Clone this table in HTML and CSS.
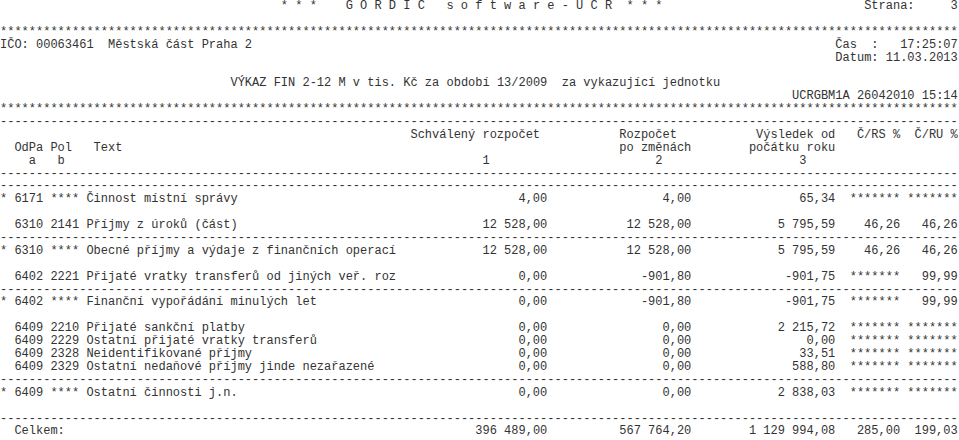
FILE: index.html
```html
<!DOCTYPE html>
<html lang="cs">
<head>
<meta charset="utf-8">
<title>VÝKAZ FIN 2-12 M</title>
<link rel="stylesheet" href="styles.css">
</head>
<body>
<div class="report">
  <div class="line split"><span class="title">* * *    G O R D I C   s o f t w a r e - U C R  * * *</span><span>Strana:     3</span></div>
  <div class="line blank"></div>
  <div class="line">*************************************************************************************************************************************</div>
  <div class="line split"><span>IČO: 00063461  Městská část Praha 2</span><span>Čas  :   17:25:07</span></div>
  <div class="line split"><span></span><span>Datum: 11.03.2013</span></div>
  <div class="line blank"></div>
  <div class="line indent">VÝKAZ FIN 2-12 M v tis. Kč za období 13/2009  za vykazující jednotku</div>
  <div class="line split"><span></span><span>UCRGBM1A 26042010 15:14</span></div>
  <div class="line">*************************************************************************************************************************************</div>
  <div class="line">-------------------------------------------------------------------------------------------------------------------------------------</div>
  <div class="row"><span></span><span>Schválený rozpočet </span><span>Rozpočet  </span><span>Výsledek od</span><span>Č/RS %</span><span>Č/RU %</span></div>
  <div class="row"><span>  OdPa Pol   Text</span><span></span><span>po změnách</span><span>počátku roku</span><span></span><span></span></div>
  <div class="row"><span>    a   b</span><span>1        </span><span>2    </span><span>3    </span><span></span><span></span></div>
  <div class="line">-------------------------------------------------------------------------------------------------------------------------------------</div>
  <div class="line">-------------------------------------------------------------------------------------------------------------------------------------</div>
  <div class="row"><span>* 6171 **** Činnost místní správy</span><span>4,00</span><span>4,00</span><span>65,34</span><span>*******</span><span>*******</span></div>
  <div class="line blank"></div>
  <div class="row"><span>  6310 2141 Příjmy z úroků (část)</span><span>12 528,00</span><span>12 528,00</span><span>5 795,59</span><span>46,26</span><span>46,26</span></div>
  <div class="line">-------------------------------------------------------------------------------------------------------------------------------------</div>
  <div class="row"><span>* 6310 **** Obecné příjmy a výdaje z finančních operací</span><span>12 528,00</span><span>12 528,00</span><span>5 795,59</span><span>46,26</span><span>46,26</span></div>
  <div class="line blank"></div>
  <div class="row"><span>  6402 2221 Přijaté vratky transferů od jiných veř. roz</span><span>0,00</span><span>-901,80</span><span>-901,75</span><span>*******</span><span>99,99</span></div>
  <div class="line">-------------------------------------------------------------------------------------------------------------------------------------</div>
  <div class="row"><span>* 6402 **** Finanční vypořádání minulých let</span><span>0,00</span><span>-901,80</span><span>-901,75</span><span>*******</span><span>99,99</span></div>
  <div class="line blank"></div>
  <div class="row"><span>  6409 2210 Přijaté sankční platby</span><span>0,00</span><span>0,00</span><span>2 215,72</span><span>*******</span><span>*******</span></div>
  <div class="row"><span>  6409 2229 Ostatní přijaté vratky transferů</span><span>0,00</span><span>0,00</span><span>0,00</span><span>*******</span><span>*******</span></div>
  <div class="row"><span>  6409 2328 Neidentifikované příjmy</span><span>0,00</span><span>0,00</span><span>33,51</span><span>*******</span><span>*******</span></div>
  <div class="row"><span>  6409 2329 Ostatní nedaňové příjmy jinde nezařazené</span><span>0,00</span><span>0,00</span><span>588,80</span><span>*******</span><span>*******</span></div>
  <div class="line">-------------------------------------------------------------------------------------------------------------------------------------</div>
  <div class="row"><span>* 6409 **** Ostatní činnosti j.n.</span><span>0,00</span><span>0,00</span><span>2 838,03</span><span>*******</span><span>*******</span></div>
  <div class="line blank"></div>
  <div class="line">-------------------------------------------------------------------------------------------------------------------------------------</div>
  <div class="row"><span>  Celkem:</span><span>396 489,00</span><span>567 764,20</span><span>1 129 994,08</span><span>285,00</span><span>199,03</span></div>
</div>
</body>
</html>
```

FILE: styles.css
```css
html, body {
  margin: 0;
  padding: 0;
  background: #ffffff;
  overflow: hidden;
}

.report {
  width: 133ch;
  font-family: "Liberation Mono", "DejaVu Sans Mono", monospace;
  font-size: 12px;
  line-height: 12.9px;
  color: #333333;
}

.line {
  height: 12.9px;
  white-space: pre;
}

.split {
  display: flex;
  justify-content: space-between;
}

.title {
  padding-left: 39ch;
}

.indent {
  padding-left: 32ch;
}

.row {
  display: grid;
  grid-template-columns: 55ch 21ch 20ch 20ch 9ch 8ch;
  height: 12.9px;
}

.row > span {
  white-space: pre;
}

.row > span:not(:first-child) {
  text-align: right;
}
```
